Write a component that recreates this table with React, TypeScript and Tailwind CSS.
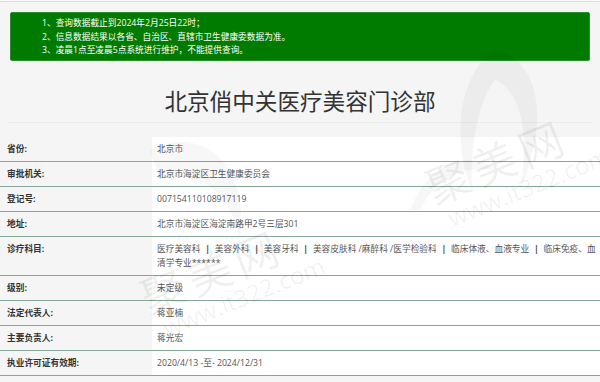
import React from 'react';

const Sep = () => <b className="mx-[2.5px] text-[#444]">|</b>;

const rows: { label: string; value: React.ReactNode }[] = [
  { label: '省份:', value: '北京市' },
  { label: '审批机关:', value: '北京市海淀区卫生健康委员会' },
  { label: '登记号:', value: '007154110108917119' },
  { label: '地址:', value: '北京市海淀区海淀南路甲2号三层301' },
  {
    label: '诊疗科目:',
    value: (
      <>
        医疗美容科 <Sep /> 美容外科 <Sep /> 美容牙科 <Sep /> 美容皮肤科 /麻醉科 /医学检验科 <Sep /> 临床体液、血液专业{' '}
        <Sep /> 临床免疫、血清学专业******
      </>
    ),
  },
  { label: '级别:', value: '未定级' },
  { label: '法定代表人:', value: '蒋亚楠' },
  { label: '主要负责人:', value: '蒋光宏' },
  { label: '执业许可证有效期:', value: '2020/4/13 -至- 2024/12/31' },
];

// faint site watermark drawn over the page
const Watermark = ({ className }: { className: string }) => (
  <div className={`absolute pointer-events-none flex flex-col items-center -rotate-[22deg] ${className}`}>
    <span className="text-[44px] leading-[48px] tracking-[6px] text-black/[0.06] font-['Noto_Sans_CJK_SC',sans-serif]">
      聚美网
    </span>
    <span className="text-[24px] leading-[26px] ml-[40px] text-black/[0.06] font-['Open_Sans',sans-serif]">
      www.it322.com
    </span>
  </div>
);

export default function App() {
  return (
    <div className="relative w-[600px] h-[382px] overflow-hidden bg-[#f5f5f5] font-['Open_Sans','Noto_Sans_CJK_SC',sans-serif]">
      <div className="h-px bg-white" />
      <div className="h-px bg-[#dcdcdc]" />

      {/* notice box */}
      <div className="mx-[10px] mt-[10px] h-[49px] rounded-[2px] border border-[#2a8f2a] bg-[#007b00] pl-[31px] pt-[4px] text-[8.7px] leading-[13.5px] text-white">
        <p>1、查询数据截止到2024年2月25日22时；</p>
        <p>2、信息数据结果以各省、自治区、直辖市卫生健康委数据为准。</p>
        <p>3、凌晨1点至凌晨5点系统进行维护，不能提供查询。</p>
      </div>

      <h1 className="pt-[25px] pb-[6px] text-center text-[22.6px] leading-[30px] font-normal text-[#333] font-['Noto_Sans_CJK_SC',sans-serif]">
        北京俏中关医疗美容门诊部
      </h1>
      <div className="mx-[8px] h-px bg-[#ebebeb]" />

      <div className="mt-[14px] text-[8.7px] leading-[14px]">
        {rows.map((r) => (
          <div key={r.label} className="flex border-b border-[#84a797]">
            <div className="w-[152px] shrink-0 py-[5px] pl-[7px] font-bold text-[#333]">{r.label}</div>
            <div className="flex-1 bg-white py-[5px] pl-[5px] pr-[1px] text-[#555]">{r.value}</div>
          </div>
        ))}
      </div>

      {/* watermark logos */}
      <svg className="absolute left-[400px] top-[40px] pointer-events-none" width="180" height="170" viewBox="0 0 180 170">
        <path d="M95 10 C140 20 150 80 120 150 C130 90 120 50 95 40 C80 60 70 100 72 150 C50 100 60 30 95 10 Z" fill="rgba(0,0,0,0.035)" />
        <path d="M10 170 C30 120 70 110 95 130 C60 125 35 140 20 170 Z" fill="rgba(0,0,0,0.03)" />
      </svg>
      <svg className="absolute left-[140px] top-[130px] pointer-events-none" width="120" height="130" viewBox="0 0 120 130">
        <path d="M10 20 C60 -5 110 30 100 110 C90 60 60 40 20 50 Z" fill="rgba(0,0,0,0.03)" />
      </svg>
      <Watermark className="left-[395px] top-[135px]" />
      <Watermark className="left-[110px] top-[245px]" />
    </div>
  );
}
